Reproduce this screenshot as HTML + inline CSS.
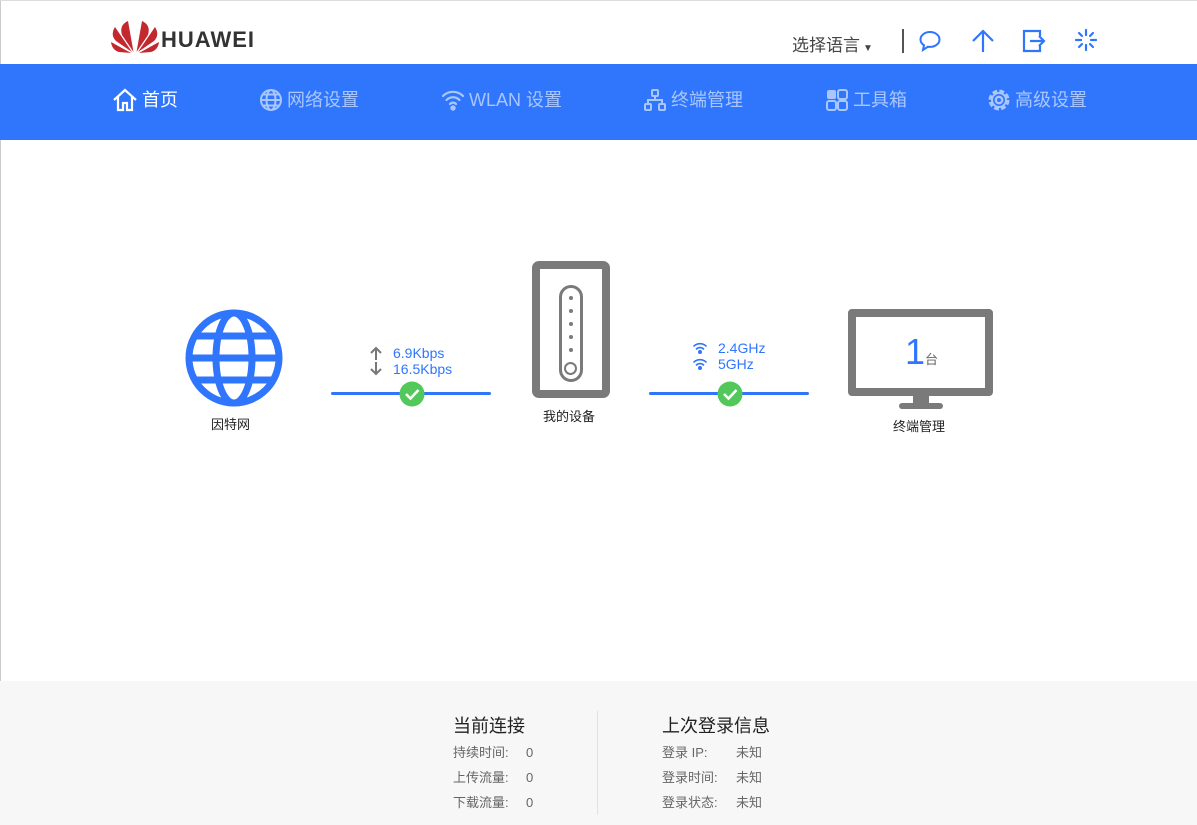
<!DOCTYPE html>
<html><head><meta charset="utf-8"><style>
*{margin:0;padding:0;box-sizing:border-box}
body{width:1197px;height:825px;overflow:hidden;background:#fff;font-family:"Liberation Sans","Noto Sans CJK SC",sans-serif;position:relative}
.a{position:absolute;white-space:nowrap}
.nav{position:absolute;left:0;top:64px;width:1197px;height:76px;background:#2f76fd}
.ni{position:absolute;top:24px;font-size:18px;color:#a9c6ff;display:flex;align-items:center;gap:4px;line-height:24px}
.foot{position:absolute;left:0;top:681px;width:1197px;height:144px;background:#f7f7f7}
.lbl{font-size:13px;color:#666;line-height:16px}
</style></head><body>
<div class="a" style="left:0;top:0;width:1px;height:825px;background:#ccc"></div>
<div class="a" style="left:0;top:0;width:1197px;height:1px;background:#ddd"></div>
<!-- logo -->
<svg class="a" style="left:111px;top:20px" width="48" height="34" viewBox="0 0 48 34">
<g fill="#c4282f">
<path d="M22.5 32 L17 1 Q8 5 11 15 Z"/>
<path d="M25.5 32 L31 1 Q40 5 37 15 Z"/>
<path d="M21 32 L4 7 Q-1 15 5 21 Z"/>
<path d="M27 32 L44 7 Q49 15 43 21 Z"/>
<path d="M20 33 L0 22 Q1 30 8 32 Z"/>
<path d="M28 33 L48 22 Q47 30 40 32 Z"/>
</g></svg>
<div class="a" style="left:161px;top:27px;font-size:22px;font-weight:bold;color:#333;letter-spacing:1px;-webkit-text-stroke:0">HUAWEI</div>
<div class="a" style="left:792px;top:31px;font-size:17px;color:#444">选择语言<span style="font-size:10px;margin-left:3px">▼</span></div>
<div class="a" style="left:902px;top:29px;width:2px;height:24px;background:#555"></div>
<svg class="a" style="left:918px;top:29px" width="24" height="24" viewBox="0 0 24 24" fill="none" stroke="#2f76fd" stroke-width="2"><path d="M12 3C6.5 3 2.5 6.5 2.5 10.5c0 2.5 1.5 4.5 3.5 5.7L5 21l5-3.3c.7.1 1.3.2 2 .2 5.5 0 9.5-3.4 9.5-7.4S17.5 3 12 3z"/></svg>
<svg class="a" style="left:970px;top:28px" width="26" height="26" viewBox="0 0 26 26" fill="none" stroke="#2f76fd" stroke-width="2.2"><path d="M13 24V3M3 13L13 3l10 10"/></svg>
<svg class="a" style="left:1021px;top:28px" width="26" height="26" viewBox="0 0 26 26" fill="none" stroke="#2f76fd" stroke-width="2.2"><path d="M19 8V3H3v20h16v-5M9 13h14M18 8l5 5-5 5"/></svg>
<svg class="a" style="left:1074px;top:28px" width="24" height="24" viewBox="0 0 24 24" stroke="#2f76fd" stroke-width="2.2" stroke-linecap="round"><path d="M12 2v5M12 17v5M2 12h5M17 12h5M5 5l3 3M16 16l3 3M19 5l-3 3M8 16l-3 3"/></svg>

<div class="nav">
<div class="ni" style="left:112px;color:#fff"><svg width="26" height="24" viewBox="0 0 26 24" fill="none" stroke="#fff" stroke-width="2.2"><path d="M2 12L13 2l11 10M6 9v13h5v-7h4v7h5V9"/></svg>首页</div>
<div class="ni" style="left:259px"><svg width="24" height="24" viewBox="0 0 24 24" fill="none" stroke="#a9c6ff" stroke-width="2"><circle cx="12" cy="12" r="10"/><ellipse cx="12" cy="12" rx="4.5" ry="10"/><path d="M2 12h20M4 6.5h16M4 17.5h16"/></svg>网络设置</div>
<div class="ni" style="left:441px"><svg width="24" height="22" viewBox="0 0 24 22" fill="none" stroke="#a9c6ff" stroke-width="2.2" stroke-linecap="round"><path d="M2 7a14 14 0 0 1 20 0M5.5 11a9 9 0 0 1 13 0M9 15a4 4 0 0 1 6 0"/><circle cx="12" cy="19" r="1.6" fill="#a9c6ff"/></svg>WLAN 设置</div>
<div class="ni" style="left:643px"><svg width="24" height="24" viewBox="0 0 24 24" fill="none" stroke="#a9c6ff" stroke-width="2"><rect x="9" y="2" width="6" height="6" rx="1"/><rect x="2" y="16" width="6" height="6" rx="1"/><rect x="16" y="16" width="6" height="6" rx="1"/><path d="M12 8v4M5 16v-4h14v4"/></svg>终端管理</div>
<div class="ni" style="left:825px"><svg width="24" height="24" viewBox="0 0 24 24" fill="#a9c6ff"><rect x="2" y="2" width="9" height="9" rx="2"/><rect x="13" y="2" width="9" height="9" rx="2" fill="none" stroke="#a9c6ff" stroke-width="2"/><rect x="2" y="13" width="9" height="9" rx="2" fill="none" stroke="#a9c6ff" stroke-width="2"/><rect x="13" y="13" width="9" height="9" rx="2" fill="none" stroke="#a9c6ff" stroke-width="2"/></svg>工具箱</div>
<div class="ni" style="left:987px"><svg width="24" height="24" viewBox="0 0 24 24" fill="none" stroke="#a9c6ff"><circle cx="12" cy="12" r="8.5" stroke-width="4" stroke-dasharray="4.5 2.2"/><circle cx="12" cy="12" r="7" stroke-width="2"/><circle cx="12" cy="12" r="3.2" stroke-width="2.4"/></svg>高级设置</div>
</div>

<!-- globe -->
<svg class="a" style="left:184px;top:308px" width="100" height="100" viewBox="0 0 100 100" fill="none" stroke="#2f76fd" stroke-width="7"><circle cx="50" cy="50" r="45"/><ellipse cx="50" cy="50" rx="18" ry="45"/><path d="M5 50h90M12 28h76M12 72h76"/></svg>
<div class="a" style="left:211px;top:414px;font-size:13px;color:#222">因特网</div>

<!-- line 1 -->
<div class="a" style="left:331px;top:392px;width:160px;height:3px;background:#2f76fd;border-radius:2px"></div>
<svg class="a" style="left:399px;top:381px" width="26" height="26" viewBox="0 0 26 26"><circle cx="13" cy="13" r="12.5" fill="#52c75a"/><path d="M7 13l4.5 4.5L19.5 9" fill="none" stroke="#fff" stroke-width="2.6"/></svg>
<svg class="a" style="left:368px;top:346px" width="16" height="30" viewBox="0 0 16 30" fill="none" stroke="#777" stroke-width="2"><path d="M8 14V2M3 7l5-5 5 5M8 16v12M3 23l5 5 5-5"/></svg>
<div class="a" style="left:393px;top:345px;font-size:14px;color:#2f76fd;line-height:16px">6.9Kbps<br>16.5Kbps</div>

<!-- router -->
<div class="a" style="left:532px;top:261px;width:78px;height:137px;border:8px solid #7a7a7a;border-radius:7px"></div>
<div class="a" style="left:559px;top:285px;width:24px;height:97px;border:3px solid #7a7a7a;border-radius:12px"></div>
<div class="a" style="left:569px;top:296px;width:4px;height:4px;border-radius:50%;background:#7a7a7a;box-shadow:0 13px #7a7a7a,0 26px #7a7a7a,0 39px #7a7a7a,0 52px #7a7a7a"></div>
<div class="a" style="left:564px;top:362px;width:13px;height:13px;border:2.5px solid #7a7a7a;border-radius:50%"></div>
<div class="a" style="left:543px;top:406px;font-size:13px;color:#222">我的设备</div>

<!-- line 2 -->
<div class="a" style="left:649px;top:392px;width:160px;height:3px;background:#2f76fd;border-radius:2px"></div>
<svg class="a" style="left:717px;top:381px" width="26" height="26" viewBox="0 0 26 26"><circle cx="13" cy="13" r="12.5" fill="#52c75a"/><path d="M7 13l4.5 4.5L19.5 9" fill="none" stroke="#fff" stroke-width="2.6"/></svg>
<svg class="a" style="left:692px;top:341px" width="16" height="32" viewBox="0 0 16 32" fill="none" stroke="#2f76fd" stroke-width="1.6" stroke-linecap="round"><path d="M2 5a9 9 0 0 1 12 0M4.5 8a5 5 0 0 1 7 0"/><circle cx="8" cy="11" r="1.2" fill="#2f76fd"/><path d="M2 21a9 9 0 0 1 12 0M4.5 24a5 5 0 0 1 7 0"/><circle cx="8" cy="27" r="1.2" fill="#2f76fd"/></svg>
<div class="a" style="left:718px;top:340px;font-size:14px;color:#2f76fd;line-height:16px">2.4GHz<br>5GHz</div>

<!-- monitor -->
<div class="a" style="left:848px;top:309px;width:145px;height:87px;border:8px solid #7a7a7a;border-radius:4px"></div>
<div class="a" style="left:913px;top:395px;width:16px;height:10px;background:#7a7a7a"></div>
<div class="a" style="left:899px;top:403px;width:44px;height:6px;background:#7a7a7a;border-radius:3px"></div>
<div class="a" style="left:905px;top:332px;font-size:36px;color:#2f76fd;line-height:40px">1</div>
<div class="a" style="left:925px;top:349px;font-size:13px;color:#666">台</div>
<div class="a" style="left:893px;top:416px;font-size:13px;color:#222">终端管理</div>

<!-- footer -->
<div class="foot">
<div class="a" style="left:597px;top:30px;width:1px;height:104px;background:#e2e2e2"></div>
<div class="a" style="left:453px;top:31px;font-size:18px;color:#222">当前连接</div>
<div class="a lbl" style="left:453px;top:64px">持续时间:</div><div class="a lbl" style="left:526px;top:64px">0</div>
<div class="a lbl" style="left:453px;top:89px">上传流量:</div><div class="a lbl" style="left:526px;top:89px">0</div>
<div class="a lbl" style="left:453px;top:114px">下载流量:</div><div class="a lbl" style="left:526px;top:114px">0</div>
<div class="a" style="left:662px;top:31px;font-size:18px;color:#222">上次登录信息</div>
<div class="a lbl" style="left:662px;top:64px">登录 IP:</div><div class="a lbl" style="left:736px;top:64px">未知</div>
<div class="a lbl" style="left:662px;top:89px">登录时间:</div><div class="a lbl" style="left:736px;top:89px">未知</div>
<div class="a lbl" style="left:662px;top:114px">登录状态:</div><div class="a lbl" style="left:736px;top:114px">未知</div>
</div>
</body></html>
